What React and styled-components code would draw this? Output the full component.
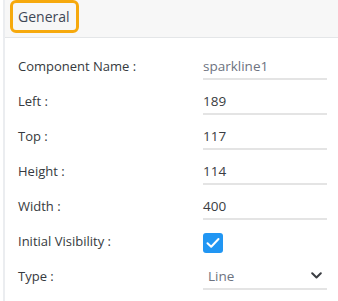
import React from "react";
import styled, { createGlobalStyle } from "styled-components";

const Global = createGlobalStyle`
  html, body { margin: 0; padding: 0; background: #ffffff; }
  body { font-family: "Open Sans", "Liberation Sans", sans-serif; }
`;

const Panel = styled.div`
  width: 338px;
  height: 301px;
  box-sizing: border-box;
  margin-left: 3px;
  border-left: 2px solid #ebedf0;
  background: #fff;
  overflow: hidden;
`;

const Header = styled.div`
  height: 38px;
  box-sizing: border-box;
  background: #f7f7f7;
  border-bottom: 1px solid #e4e6e8;
  display: flex;
  align-items: center;
  padding-left: 5px;
`;

const Tab = styled.div`
  box-sizing: border-box;
  height: 33px;
  width: 69px;
  margin-top: -4px;
  border: 3px solid #f6a90d;
  border-radius: 6px;
  display: flex;
  align-items: center;
  padding-left: 5px;
  font-size: 14px;
  color: #3f4756;
`;

const Form = styled.div`
  display: grid;
  grid-template-columns: 185px 124px;
  grid-auto-rows: 35px;
  padding: 13px 0 0 13px;
`;

const Label = styled.div`
  font-size: 13px;
  color: #363a40;
  display: flex;
  align-items: center;
  height: 30px;
`;

const Field = styled.div`
  height: 27px;
  margin-top: 2px;
  box-sizing: border-box;
  border-bottom: ${p => (p.$plain ? "none" : "2px solid #e4e4e4")};
  display: flex;
  align-items: center;
  justify-content: space-between;
  font-size: 13.5px;
  color: ${p => (p.$muted ? "#6d7380" : "#3a3d42")};
  padding-left: ${p => (p.$indent ? "5px" : "0")};
  padding-right: 5px;
`;

const Check = styled.div`
  width: 20px;
  height: 20px;
  border-radius: 3px;
  background: #2196f3;
  display: flex;
  align-items: center;
  justify-content: center;
  margin-top: 2px;
`;

const rows = [
  ["Component Name :", "sparkline1", "muted"],
  ["Left :", "189"],
  ["Top :", "117"],
  ["Height :", "114"],
  ["Width :", "400"],
];

export default function App() {
  return (
    <>
      <Global />
      <Panel>
        <Header>
          <Tab>General</Tab>
        </Header>
        <Form>
          {rows.map(([l, v, m]) => (
            <React.Fragment key={l}>
              <Label>{l}</Label>
              <Field $muted={m === "muted"}>{v}</Field>
            </React.Fragment>
          ))}
          <Label>Initial Visibility :</Label>
          <Field $plain>
            <Check>
              <svg width="14" height="12" viewBox="0 0 14 12">
                <path d="M1.5 6.2 L5.2 9.8 L12.5 2" fill="none" stroke="#fff" strokeWidth="2" strokeLinecap="round" strokeLinejoin="round" />
              </svg>
            </Check>
          </Field>
          <Label>Type :</Label>
          <Field $indent $muted>
            <span>Line</span>
            <svg width="11" height="7" viewBox="0 0 11 7">
              <path d="M1.2 1.2 L5.5 5.5 L9.8 1.2" fill="none" stroke="#3a3d42" strokeWidth="2" strokeLinecap="round" strokeLinejoin="round" />
            </svg>
          </Field>
        </Form>
      </Panel>
    </>
  );
}
